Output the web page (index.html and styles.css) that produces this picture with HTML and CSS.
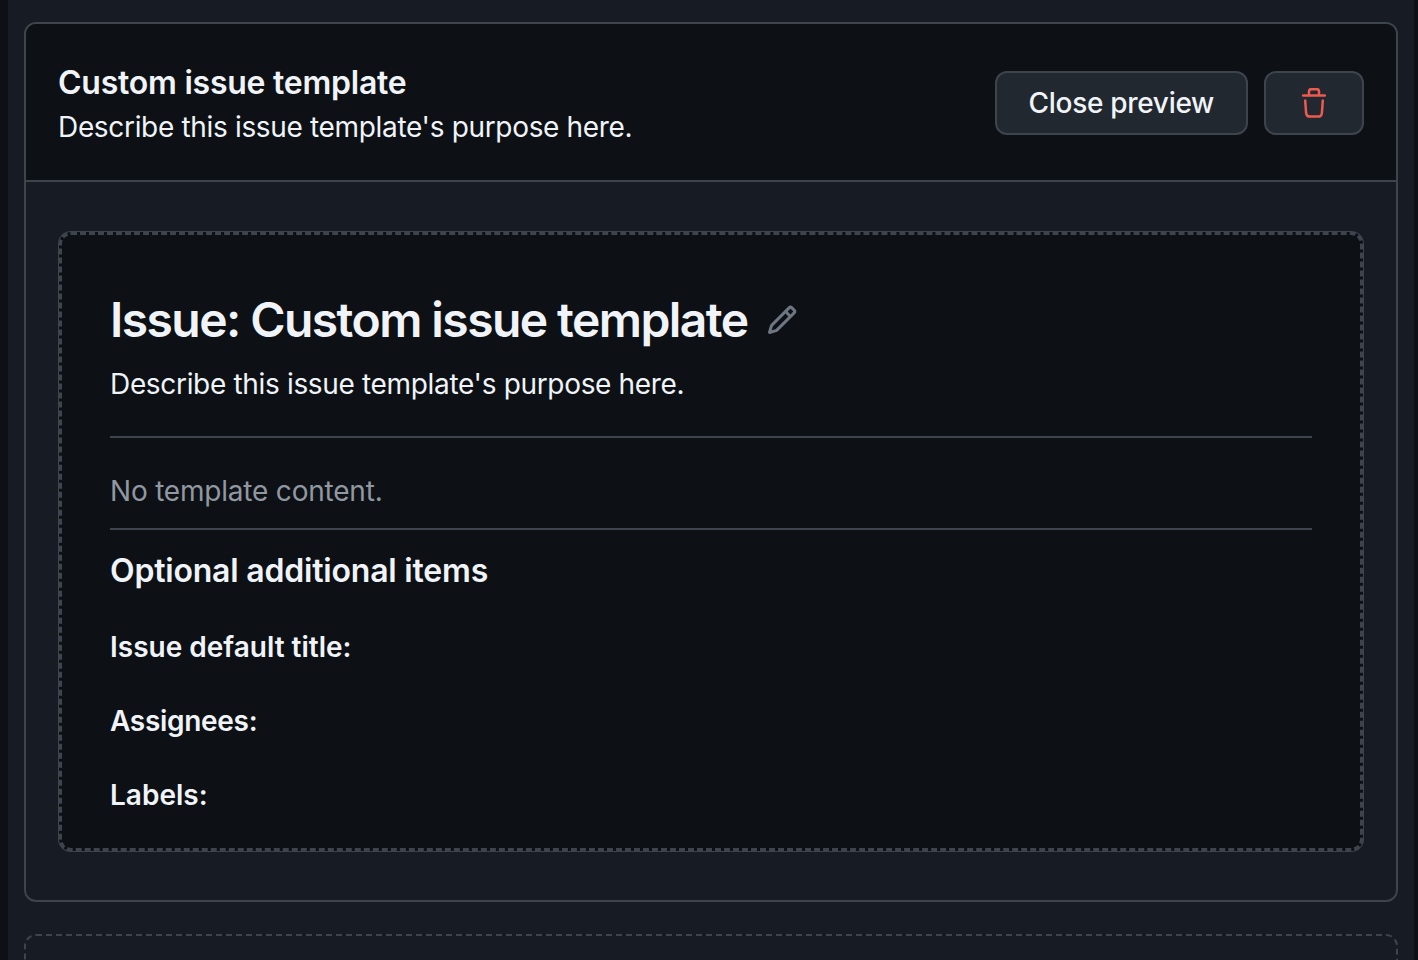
FILE: index.html
```html
<!DOCTYPE html>
<html>

<head>
    <meta charset="UTF-8">
    <title>Issue template</title>
    <link rel="stylesheet" href="styles.css">
</head>

<body>
    <div class="page">
        <div class="card">
            <div class="card-head">
                <div class="head-text">
                    <h3>Custom issue template</h3>
                    <p>Describe this issue template's purpose here.</p>
                </div>
                <div class="head-btns">
                    <button class="btn">Close preview</button>
                    <button class="btn btn-icon">
                        <svg width="24" height="30" viewBox="0 0 24 30" fill="none" stroke="#ee5a50" stroke-width="2.5" stroke-linecap="round" stroke-linejoin="round">
                            <path d="M1.2 7.5h21.6" />
                            <path d="M7 7V3.6C7 2.2 8 1.2 9.4 1.2h5.2C16 1.2 17 2.2 17 3.6V7" />
                            <path d="M3.2 12.6l.9 12.2c.2 2.3 1.6 3.8 3.9 3.8h8c2.3 0 3.7-1.5 3.9-3.8l.9-12.2" />
                        </svg>
                    </button>
                </div>
            </div>
            <div class="card-body">
                <div class="preview">
                    <div class="title-row">
                        <h1>Issue: Custom issue template</h1>
                        <svg class="pencil" width="32" height="32" viewBox="0 0 16 16" fill="#6e7681">
                            <path d="M11.013 1.427a1.75 1.75 0 0 1 2.474 0l1.086 1.086a1.75 1.75 0 0 1 0 2.474l-8.61 8.61c-.21.21-.47.364-.756.445l-3.251.93a.75.75 0 0 1-.927-.928l.929-3.25c.081-.286.235-.547.445-.758l8.61-8.61Zm.176 4.823L9.75 4.81l-6.286 6.287a.253.253 0 0 0-.064.108l-.558 1.953 1.953-.558a.253.253 0 0 0 .108-.064Zm1.238-3.763a.25.25 0 0 0-.354 0L10.811 3.75l1.439 1.44 1.263-1.263a.25.25 0 0 0 0-.354Z" />
                        </svg>
                    </div>
                    <p class="about">Describe this issue template's purpose here.</p>
                    <div class="no-content">No template content.</div>
                    <h2>Optional additional items</h2>
                    <div class="item item-first">Issue default title:</div>
                    <div class="item item-tight">Assignees:</div>
                    <div class="item">Labels:</div>
                </div>
            </div>
        </div>
        <svg class="add-box" width="1374" height="200" viewBox="0 0 1374 200" fill="none" stroke="#3d444d" stroke-width="2" stroke-dasharray="6 4">
            <rect x="1" y="1" width="1372" height="198" rx="11" />
        </svg>
    </div>
</body>

</html>
```

FILE: styles.css
```css
body,
p,
h1,
h2,
h3,
button {
    margin: 0;
    padding: 0;
}

html,
body {
    height: 960px;
    overflow: hidden;
}

body {
    background: #0d1014;
    color: #f0f4f9;
    font-family: Inter, "Liberation Sans", sans-serif;
}

.page {
    height: 960px;
    margin: 0 4px 0 8px;
    padding: 22px 16px 0;
    box-sizing: border-box;
    background: #171b23;
    overflow: hidden;
}

.card {
    border: 2px solid #3d444d;
    border-radius: 12px;
}

.card-head {
    display: flex;
    align-items: center;
    justify-content: space-between;
    height: 156px;
    padding: 0 32px;
    background: #0d1014;
    border-bottom: 2px solid #3d444d;
    border-radius: 10px 10px 0 0;
}

.head-text {
    margin-top: 6px;
}

.head-text h3 {
    font-size: 32px;
    line-height: 44px;
    font-weight: 600;
    letter-spacing: -0.24px;
}

.head-text p {
    font-size: 28px;
    line-height: 44px;
    letter-spacing: -0.33px;
}

.head-btns {
    display: flex;
    gap: 16px;
    margin-top: 2px;
}

.btn {
    height: 64px;
    padding: 0 32px;
    background: #22282f;
    border: 2px solid #3d444d;
    border-radius: 12px;
    color: #f0f4f9;
    font-family: inherit;
    font-size: 28px;
    font-weight: 500;
    letter-spacing: -0.3px;
}

.btn-icon {
    display: flex;
    align-items: center;
    justify-content: center;
    width: 100px;
    padding: 0;
}

.card-body {
    padding: 50px 33px 49px;
}

.preview {
    padding: 49px 48px 32px;
    background: #0d1014;
    border: 3px dashed #3d444d;
    border-radius: 12px;
    box-shadow: 0 0 0 1px #3d444d;
}

.title-row {
    display: flex;
    align-items: center;
    gap: 18px;
    height: 72px;
}

h1 {
    font-size: 48px;
    line-height: 72px;
    font-weight: 600;
    letter-spacing: -1.57px;
}

.about {
    margin-top: 8px;
    padding-bottom: 32px;
    font-size: 28px;
    line-height: 40px;
    letter-spacing: -0.33px;
    border-bottom: 2px solid #3d444d;
}

.no-content {
    padding: 32px 0 16px;
    height: 92px;
    box-sizing: border-box;
    color: #9198a1;
    font-size: 28px;
    line-height: 42px;
    letter-spacing: -0.2px;
    border-bottom: 2px solid #3d444d;
}

h2 {
    margin-top: 19px;
    font-size: 32px;
    line-height: 44px;
    font-weight: 600;
    letter-spacing: -0.2px;
}

.item {
    margin-top: 32px;
    font-size: 28px;
    line-height: 42px;
    font-weight: 600;
}

.item-first {
    margin-top: 33px;
}

.item-tight {
    letter-spacing: -0.3px;
}

.add-box {
    display: block;
    margin-top: 32px;
}
```
